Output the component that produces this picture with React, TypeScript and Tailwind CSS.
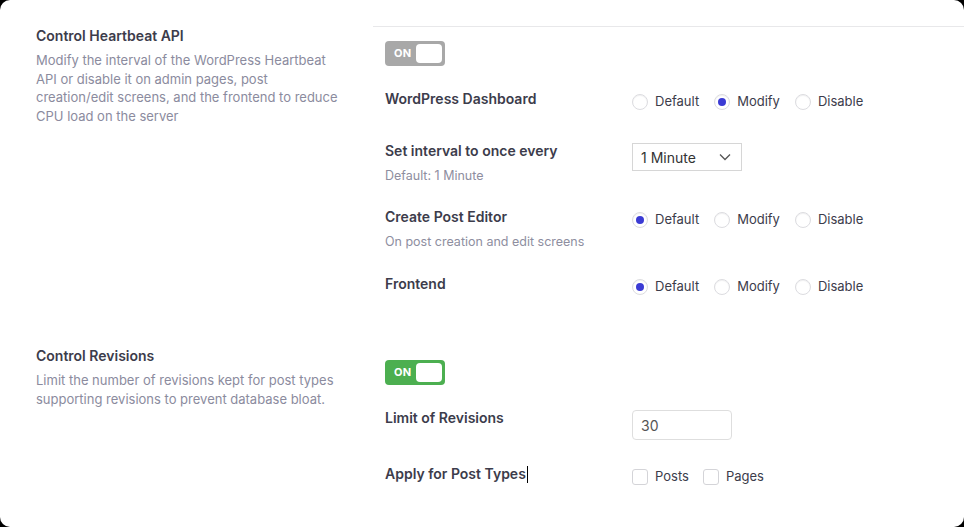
import React from 'react';

type Choice = 'Default' | 'Modify' | 'Disable';

function Toggle({color}: {color: string}) {
  return (
    <div
      className={`flex h-[25px] w-[60px] items-center justify-between rounded-[4px] pl-[9px] pr-[3px] ${color}`}
    >
      <span className="text-[11px] font-bold tracking-wide text-white">ON</span>
      <span className="h-[19px] w-[26px] rounded-[4px] bg-white" />
    </div>
  );
}

function Radio({label, checked}: {label: string; checked?: boolean}) {
  return (
    <div className="mr-[15px] flex h-5 items-center">
      <span className="flex h-[16px] w-[16px] items-center justify-center rounded-full border border-[#dcdce0] bg-white shadow-[inset_0_1px_1px_rgba(0,0,0,0.06)]">
        {checked && <span className="h-[8px] w-[8px] rounded-full bg-[#3b3bd4]" />}
      </span>
      <span className="ml-[7px] text-[13px] text-[#3c3c4b]">{label}</span>
    </div>
  );
}

function RadioGroup({value, className}: {value: Choice; className: string}) {
  const options: Choice[] = ['Default', 'Modify', 'Disable'];
  return (
    <div className={`flex ${className}`}>
      {options.map((o) => (
        <Radio key={o} label={o} checked={o === value} />
      ))}
    </div>
  );
}

function Checkbox({label}: {label: string}) {
  return (
    <div className="mr-[14px] flex h-5 items-center">
      <span className="h-[16px] w-[16px] rounded-[3px] border border-[#d4d4d8] bg-white" />
      <span className="ml-[7px] text-[13px] text-[#3c3c4b]">{label}</span>
    </div>
  );
}

function Row({
  label,
  hint,
  className,
  children,
}: {
  label: React.ReactNode;
  hint?: string;
  className: string;
  children: React.ReactNode;
}) {
  return (
    <div className={`flex items-start ${className}`}>
      <div className="w-[247px] shrink-0">
        <div className="text-[14px] font-semibold leading-5 text-[#3c3c4b]">{label}</div>
        {hint && (
          <div className="mt-[5px] text-[12.5px] leading-5 text-[#8e8ea0]">{hint}</div>
        )}
      </div>
      {children}
    </div>
  );
}

function Intro({title, text}: {title: string; text: string}) {
  return (
    <div className="w-[373px] shrink-0 pl-[36px]">
      <h3 className="text-[14px] font-semibold leading-5 text-[#3c3c4b]">{title}</h3>
      <p className="mt-[5px] w-[302px] text-[13px] leading-[18.5px] text-[#8b8b9e]">{text}</p>
    </div>
  );
}

export default function App() {
  return (
    <div className="h-[527px] w-[964px] bg-black font-['Inter',sans-serif]">
      <div className="h-full w-full overflow-hidden rounded-[10px] bg-white pt-[26px]">
        {/* heartbeat */}
        <section className="flex">
          <Intro
            title="Control Heartbeat API"
            text="Modify the interval of the WordPress Heartbeat API or disable it on admin pages, post creation/edit screens, and the frontend to reduce CPU load on the server"
          />
          <div className="flex-1 border-t border-[#e8e8ea] pl-[12px] pt-[14px]">
            <Toggle color="bg-[#a8a8a8]" />
            <Row label="WordPress Dashboard" className="mt-[23px]">
              <RadioGroup value="Modify" className="mt-[3px]" />
            </Row>
            <Row label="Set interval to once every" hint="Default: 1 Minute" className="mt-[29px]">
              <div className="mt-[2px] flex h-[28px] w-[110px] items-center justify-between border border-[#d6d6d6] bg-white pl-[8px] pr-[10px] text-[14px] text-[#333]">
                <span>1 Minute</span>
                <svg width="12" height="8" viewBox="0 0 12 8" fill="none">
                  <path d="M1 1.5l5 5 5-5" stroke="#555" strokeWidth="1.3" />
                </svg>
              </div>
            </Row>
            <Row
              label="Create Post Editor"
              hint="On post creation and edit screens"
              className="mt-[21px]"
            >
              <RadioGroup value="Default" className="mt-[3px]" />
            </Row>
            <Row label="Frontend" className="mt-[22px]">
              <RadioGroup value="Default" className="mt-[3px]" />
            </Row>
          </div>
        </section>

        {/* revisions */}
        <section className="mt-[49px] flex">
          <Intro
            title="Control Revisions"
            text="Limit the number of revisions kept for post types supporting revisions to prevent database bloat."
          />
          <div className="flex-1 pl-[12px] pt-[14px]">
            <Toggle color="bg-[#4caf50]" />
            <Row label="Limit of Revisions" className="mt-[23px]">
              <div className="mt-[2px] flex h-[30px] w-[100px] items-center rounded-[4px] border border-[#dedede] pl-[8px] text-[14px] text-[#555]">
                30
              </div>
            </Row>
            <Row
              label={
                <span className="inline-flex items-center">
                  Apply for Post Types
                  <span className="ml-[1px] inline-block h-[17px] w-px bg-black" />
                </span>
              }
              className="mt-[24px]"
            >
              <div className="mt-[3px] flex">
                <Checkbox label="Posts" />
                <Checkbox label="Pages" />
              </div>
            </Row>
          </div>
        </section>
      </div>
    </div>
  );
}
